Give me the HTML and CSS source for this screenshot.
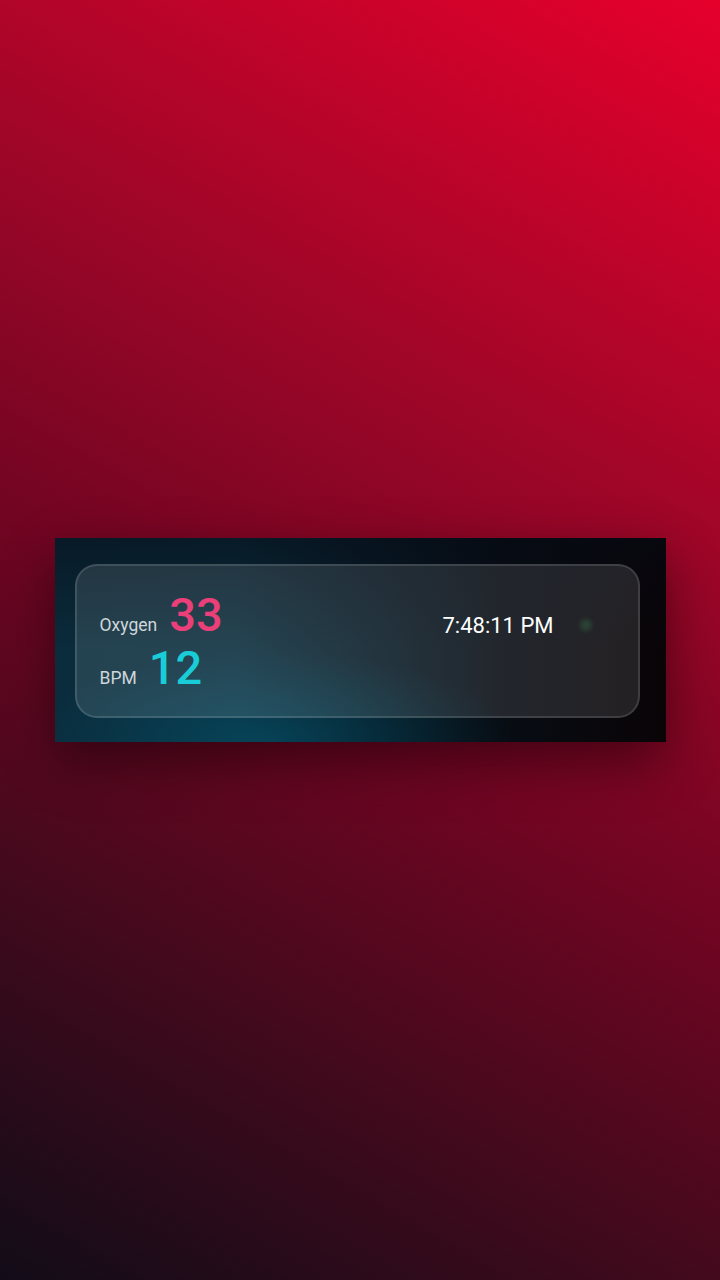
FILE: index.html
```html
<!DOCTYPE html>
<html>
<head>
<meta charset="utf-8">
<link rel="stylesheet" href="styles.css">
</head>
<body>
<div class="stage">
  <div class="panel">
    <div class="card">
      <div class="metrics">
        <div class="metric">
          <span class="label">Oxygen</span>
          <span class="value oxygen">33</span>
        </div>
        <div class="metric">
          <span class="label">BPM</span>
          <span class="value bpm">12</span>
        </div>
      </div>
      <div class="clock">
        <span class="time">7:48:11 PM</span>
        <span class="dot"></span>
      </div>
    </div>
  </div>
</div>
</body>
</html>
```
FILE: styles.css
```css
html, body {
  margin: 0;
  padding: 0;
}
body {
  width: 720px;
  height: 1280px;
  background: linear-gradient(30deg, #120c18 0%, #3e0a1c 22%, #700522 45%, #a00628 68%, #e6002c 100%);
  font-family: Roboto, "Liberation Sans", sans-serif;
  overflow: hidden;
}
.stage {
  height: 1280px;
  display: flex;
  align-items: flex-start;
  justify-content: center;
  padding-top: 538px;
  box-sizing: border-box;
}
.panel {
  width: 611px;
  height: 204px;
  box-sizing: border-box;
  padding: 26px 26px 24px 20px;
  background:
    linear-gradient(180deg, rgba(6, 10, 20, 0.55) 0%, rgba(6, 10, 20, 0) 55%),
    radial-gradient(ellipse 40% 45% at 35% 100%, rgba(0, 110, 140, 0.35), rgba(0, 80, 110, 0) 100%),
    linear-gradient(90deg, #0a2c3c 0%, #0a2e3e 30%, #081e2a 50%, #070d14 72%, #0a0407 100%);
  box-shadow: 0 20px 50px rgba(0, 0, 0, 0.45);
}
.card {
  height: 100%;
  box-sizing: border-box;
  border: 2px solid rgba(255, 255, 255, 0.13);
  border-radius: 22px;
  background: rgba(255, 255, 255, 0.11);
  display: flex;
  align-items: center;
  justify-content: space-between;
  padding: 0 46px 0 23px;
}
.metrics {
  display: flex;
  flex-direction: column;
  gap: 1px;
}
.metric {
  display: flex;
  align-items: baseline;
  gap: 10px;
  height: 52px;
}
.label {
  font-size: 17.5px;
  color: #cfd6da;
}
.value {
  font-size: 47px;
  font-weight: 500;
  line-height: 52px;
}
.bpm {
  color: #18cdd8;
  margin-left: 2px;
}
.oxygen {
  color: #ea3f78;
  margin-left: 2px;
}
.clock {
  display: flex;
  align-items: center;
  gap: 26px;
  margin-top: -32px;
}
.time {
  font-size: 22px;
  color: #ffffff;
}
.dot {
  width: 12px;
  height: 12px;
  border-radius: 50%;
  background: rgba(60, 140, 80, 0.3);
  filter: blur(2px);
}
```
